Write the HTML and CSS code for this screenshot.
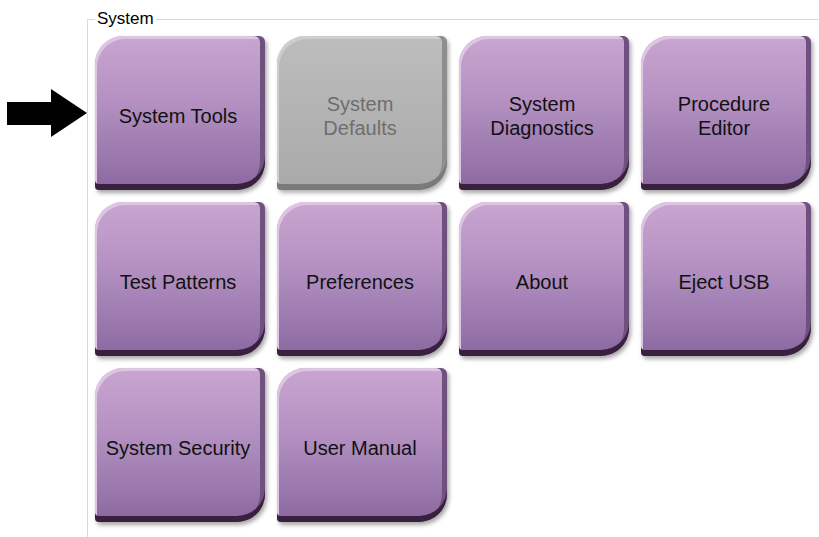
FILE: index.html
```html
<html>
  <head>
    <link rel="stylesheet" href="styles.css">
  </head>
  <body>

    <div class="page">
      <svg class="pointer" width="80" height="48" viewBox="0 0 80 48">
        <polygon points="0,13 44,13 44,0 80,24 44,48 44,36 0,36" fill="#000"/>
      </svg>

      <fieldset class="group">
        <legend>System</legend>
        <div class="tiles">
          <div class="tile">System Tools</div>
          <div class="tile off">System<br>Defaults</div>
          <div class="tile">System<br>Diagnostics</div>
          <div class="tile">Procedure<br>Editor</div>
          <div class="tile">Test Patterns</div>
          <div class="tile">Preferences</div>
          <div class="tile">About</div>
          <div class="tile">Eject USB</div>
          <div class="tile">System Security</div>
          <div class="tile">User Manual</div>
        </div>
      </fieldset>
    </div>

  </body>
</html>
```

FILE: styles.css
```css
body {
  margin: 0;
  background: #fff;
  font-family: 'Liberation Sans', Arial, sans-serif;
  overflow: hidden;
}

.page {
  display: flex;
  align-items: flex-start;
}

.pointer {
  margin: 89px 0 0 7px;
  flex: none;
}

.group {
  flex: 1;
  min-width: 0;
  margin: 9px 0 0 0;
  padding: 7px 0 24px 7px;
  border: 1px solid #d9d9d9;
  border-right: 0;
}

.group legend {
  padding: 0 2px;
  font-size: 17px;
  line-height: 20px;
  color: #000;
}

.tiles {
  display: grid;
  grid-template-columns: repeat(4, 170px);
  grid-auto-rows: 154px;
  column-gap: 12px;
  row-gap: 12px;
}

.tile {
  display: flex;
  align-items: center;
  justify-content: center;
  text-align: center;
  padding: 5px 4px 0 0;
  font-size: 20px;
  line-height: 24px;
  color: #111;
  border-radius: 28px 6px 28px 4px;
  background: linear-gradient(#c9a6d0, #b28fc0 45%, #9673a9 85%, #8b66a0);
  box-shadow:
    inset 0 -6px 0 #39203f,
    inset -5px 0 0 #70507f,
    inset 2px 3px 0 #dcc6e1,
    2px 3px 4px rgba(0, 0, 0, 0.35);
}

.tile.off {
  color: #6e6e6e;
  background: linear-gradient(#bdbdbd, #b3b3b3 50%, #a9a9a9);
  box-shadow:
    inset 0 -6px 0 #7a7a7a,
    inset -5px 0 0 #8e8e8e,
    inset 2px 3px 0 #cecece,
    2px 3px 4px rgba(0, 0, 0, 0.3);
}
```
